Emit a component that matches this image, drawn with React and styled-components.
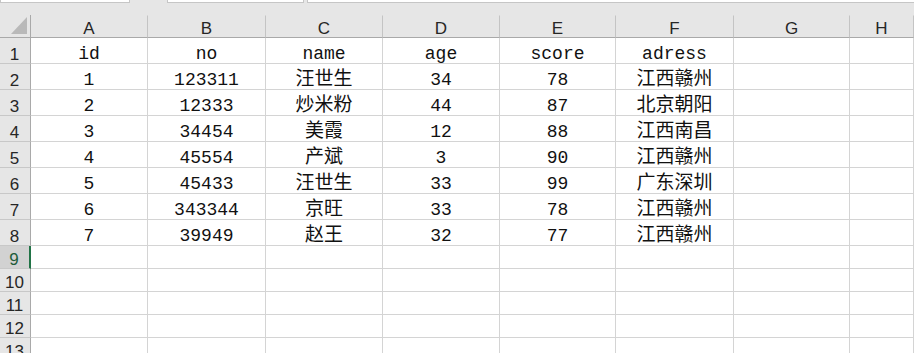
import React from "react";
import styled, { createGlobalStyle } from "styled-components";

const GlobalStyle = createGlobalStyle`
  html, body {
    margin: 0;
    padding: 0;
    background: #ffffff;
  }
`;

const columns = ["A", "B", "C", "D", "E", "F", "G", "H"];
const widths = [31, 117, 118, 117, 117, 116, 118, 116];

const rows = [
  ["id", "no", "name", "age", "score", "adress"],
  ["1", "123311", "汪世生", "34", "78", "江西赣州"],
  ["2", "12333", "炒米粉", "44", "87", "北京朝阳"],
  ["3", "34454", "美霞", "12", "88", "江西南昌"],
  ["4", "45554", "产斌", "3", "90", "江西赣州"],
  ["5", "45433", "汪世生", "33", "99", "广东深圳"],
  ["6", "343344", "京旺", "33", "78", "江西赣州"],
  ["7", "39949", "赵王", "32", "77", "江西赣州"],
];

const emptyRows = [9, 10, 11, 12, 13];

const isCjk = (s) => /[\u4e00-\u9fff]/.test(s);

export default function App() {
  return (
    <>
      <GlobalStyle />
      <Page>
        <TopStrip>
          <NameBox />
          <FormulaSlot />
          <FormulaBox />
        </TopStrip>
        <Sheet $cols={widths.map((w) => w + "px").join(" ") + " 1fr"}>
          <Corner>
            <svg width="16" height="17" viewBox="0 0 16 17">
              <polygon points="16,0 16,17 0,17" fill="#b9b9b9" />
            </svg>
          </Corner>
          {columns.map((c) => (
            <ColHead key={c}>{c}</ColHead>
          ))}
          {rows.map((r, i) => (
            <React.Fragment key={i}>
              <RowHead $tall>{i + 1}</RowHead>
              {columns.map((c, j) => {
                const v = r[j] || "";
                return (
                  <Cell key={c} $tall $cjk={isCjk(v)}>
                    {v}
                  </Cell>
                );
              })}
            </React.Fragment>
          ))}
          {emptyRows.map((n) => (
            <React.Fragment key={n}>
              <RowHead $active={n === 9}>{n}</RowHead>
              {columns.map((c) => (
                <Cell key={c} />
              ))}
            </React.Fragment>
          ))}
        </Sheet>
      </Page>
    </>
  );
}

const Page = styled.div`
  width: 914px;
  height: 353px;
  overflow: hidden;
  background: #e6e6e6;
`;

const TopStrip = styled.div`
  display: flex;
  height: 15px;
  align-items: flex-start;
`;

const Box = styled.div`
  height: 3px;
  box-sizing: border-box;
  background: #ffffff;
  border: 1px solid #c6c6c6;
  border-top: none;
`;

const NameBox = styled(Box)`
  width: 130px;
`;

const FormulaSlot = styled(Box)`
  width: 137px;
  margin-left: 37px;
`;

const FormulaBox = styled(Box)`
  flex: 1;
  margin-left: 3px;
  border-right: none;
`;

const Sheet = styled.div`
  display: grid;
  grid-template-columns: ${(p) => p.$cols};
  grid-auto-rows: auto;
  background: #ffffff;
`;

const Corner = styled.div`
  height: 23px;
  box-sizing: border-box;
  background: #e6e6e6;
  border-right: 1px solid #a9a9a9;
  border-bottom: 1px solid #a9a9a9;
  display: flex;
  align-items: flex-end;
  justify-content: flex-end;
  padding: 0 3px 3px 0;
`;

const ColHead = styled.div`
  height: 23px;
  box-sizing: border-box;
  background: #e6e6e6;
  border-bottom: 1px solid #a9a9a9;
  border-right: 1px solid #c4c4c4;
  border-top: 1px solid #e6e6e6;
  display: flex;
  align-items: flex-end;
  justify-content: center;
  font-family: "Liberation Sans", "Noto Sans", sans-serif;
  font-size: 17px;
  line-height: 16px;
  color: #262626;
`;

const RowHead = styled.div`
  height: ${(p) => (p.$tall ? 26 : 23)}px;
  box-sizing: border-box;
  background: ${(p) => (p.$active ? "#d2d2d2" : "#e6e6e6")};
  border-bottom: 1px solid #c8c8c8;
  border-right: ${(p) => (p.$active ? "2px solid #217346" : "1px solid #a9a9a9")};
  display: flex;
  align-items: flex-end;
  justify-content: center;
  padding-right: 1px;
  font-family: "Liberation Sans", "Noto Sans", sans-serif;
  font-size: 17px;
  line-height: 17px;
  color: ${(p) => (p.$active ? "#1e5c3a" : "#262626")};
`;

const Cell = styled.div`
  height: ${(p) => (p.$tall ? 26 : 23)}px;
  box-sizing: border-box;
  border-bottom: 1px solid #d4d4d4;
  border-right: 1px solid #d4d4d4;
  display: flex;
  align-items: flex-end;
  justify-content: center;
  overflow: hidden;
  white-space: nowrap;
  font-family: ${(p) =>
    p.$cjk
      ? '"Noto Sans CJK SC", sans-serif'
      : '"Liberation Mono", "Noto Sans CJK SC", monospace'};
  font-size: ${(p) => (p.$cjk ? 19 : 18)}px;
  line-height: ${(p) => (p.$cjk ? 24 : 18)}px;
  color: #111111;
`;
